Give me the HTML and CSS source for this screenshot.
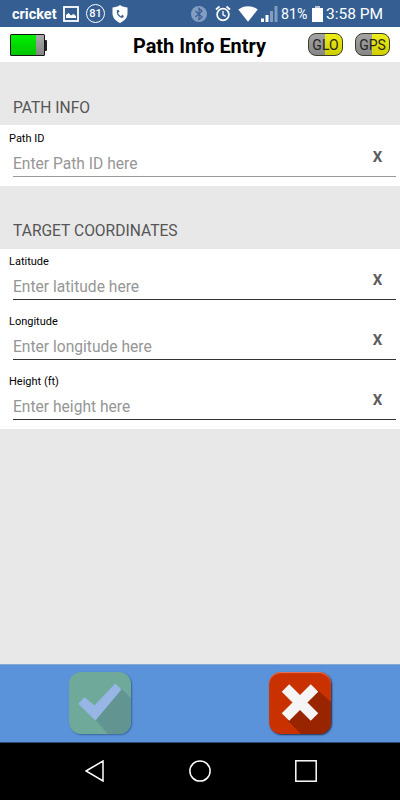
FILE: index.html
```html
<!DOCTYPE html>
<html lang="en">
<head>
    <meta charset="UTF-8">
    <title>Path Info Entry</title>
    <link rel="stylesheet" href="styles.css">
</head>
<body>
    <div class="status-bar">
        <span class="carrier">cricket</span>
        <svg class="icon-picture" width="16" height="16" viewBox="0 0 16 16">
            <rect x="1" y="1" width="14" height="14" fill="none" stroke="#fff" stroke-width="1.8"/>
            <path d="M3 12V9l2.500-2L8 9.500l2.500-1.500L13 10v2z" fill="#fff"/>
        </svg>
        <span class="badge-ring">81</span>
        <svg class="icon-shield" width="16" height="18" viewBox="0 0 16 18">
            <path d="M8 0C5.500 1.800 3 2.400.500 2.400V8.500C.500 13 4 16 8 18c4-2 7.500-5 7.500-9.500V2.400C13 2.400 10.500 1.800 8 0z" fill="#fff"/>
            <path d="M6 5.500c-1 1-.7 3.300.9 5 1.600 1.700 3.500 2 4.300 1" fill="none" stroke="#355f93" stroke-width="1.300"/>
            <path d="M5.500 5.200l1.300 2M9.500 10.600l1.700 1.200" stroke="#355f93" stroke-width="2"/>
        </svg>
        <svg class="icon-bluetooth" width="16" height="16" viewBox="0 0 16 16">
            <circle cx="8" cy="8" r="8" fill="#829dc0"/>
            <path d="M4.500 5l6.500 6-3 2.700V2.300L11 5l-6.500 6" fill="none" stroke="#355f93" stroke-width="1.200"/>
        </svg>
        <svg class="icon-alarm" width="16" height="17" viewBox="0 0 16 17">
            <circle cx="8" cy="9.500" r="5.900" fill="none" stroke="#fff" stroke-width="1.700"/>
            <path d="M1 4.500L4.500 1.500M15 4.500L11.500 1.500" stroke="#fff" stroke-width="1.800"/>
            <path d="M8 6v3.800l2.700 1.600" fill="none" stroke="#fff" stroke-width="1.300"/>
        </svg>
        <svg class="icon-wifi" width="20" height="16" viewBox="0 0 20 16">
            <path d="M.3 3.500C6-1 14-1 19.700 3.500L10 15.800z" fill="#fff"/>
        </svg>
        <svg class="icon-signal" width="17" height="16" viewBox="0 0 17 16">
            <path d="M0 12.500h3V16H0zM4.500 9h3v7h-3z" fill="#fff"/>
            <path d="M9 5h3v11H9zM13.500 0h3v16h-3z" fill="#829dc0"/>
        </svg>
        <span class="battery-percent">81%</span>
        <svg class="icon-battery" width="11" height="16" viewBox="0 0 11 16">
            <path d="M3 0h5v2h3v14H0V2h3z" fill="#fff"/>
            <path d="M3 0h5v2H3z" fill="#b9c8dc"/>
        </svg>
        <span class="clock">3:58 PM</span>
    </div>

    <header>
        <svg class="device-battery" width="37" height="22" viewBox="0 0 37 22">
            <defs>
                <linearGradient id="charge" x1="0" y1="0" x2="0" y2="1">
                    <stop offset="0" stop-color="#00f000"/>
                    <stop offset="1" stop-color="#00c400"/>
                </linearGradient>
                <linearGradient id="empty" x1="0" y1="0" x2="0" y2="1">
                    <stop offset="0" stop-color="#aaa"/>
                    <stop offset="1" stop-color="#858585"/>
                </linearGradient>
            </defs>
            <rect x="34" y="6" width="3" height="11" rx="1" fill="#222"/>
            <rect x="0" y="0" width="35" height="22" rx="1.500" fill="#151515"/>
            <rect x="1" y="1" width="25" height="20" fill="url(#charge)"/>
            <rect x="26" y="1" width="8" height="20" fill="url(#empty)"/>
        </svg>
        <h1>Path Info Entry</h1>
        <span class="source source-glo">GLO</span>
        <span class="source source-gps">GPS</span>
    </header>

    <main>
        <h2 class="first">PATH INFO</h2>
        <section class="fields fields-path">
            <div class="field">
                <label for="path-id">Path ID</label>
                <div class="entry entry-soft">
                    <input type="text" id="path-id" placeholder="Enter Path ID here">
                    <button class="clear">X</button>
                </div>
            </div>
        </section>

        <h2>TARGET COORDINATES</h2>
        <section class="fields">
            <div class="field">
                <label for="latitude">Latitude</label>
                <div class="entry">
                    <input type="text" id="latitude" placeholder="Enter latitude here">
                    <button class="clear">X</button>
                </div>
            </div>
            <div class="field">
                <label for="longitude">Longitude</label>
                <div class="entry">
                    <input type="text" id="longitude" placeholder="Enter longitude here">
                    <button class="clear">X</button>
                </div>
            </div>
            <div class="field">
                <label for="height">Height (ft)</label>
                <div class="entry">
                    <input type="text" id="height" placeholder="Enter height here">
                    <button class="clear">X</button>
                </div>
            </div>
        </section>
    </main>

    <div class="actions">
        <button class="action action-ok" aria-label="Accept">
            <svg width="62" height="62" viewBox="0 0 62 62">
                <path d="M51.500 16L62 26V62H39L26 47.500z" fill="#629592"/>
                <path d="M10.700 31.700L15.500 26.500 25.700 34.800 46.300 13 51 17.500 26.300 47z" fill="#97b6e6" stroke="#97b6e6" stroke-width="2" stroke-linejoin="round"/>
            </svg>
        </button>
        <button class="action action-cancel" aria-label="Cancel">
            <svg width="62" height="62" viewBox="0 0 62 62">
                <path d="M48.500 18L62 30V62H32L18.500 48.500z" fill="#982500"/>
                <path d="M16.500 16L45.500 45M45.500 16L16.500 45" stroke="#f5f5f5" stroke-width="10.600"/>
            </svg>
        </button>
    </div>

    <nav>
        <svg width="20" height="22" viewBox="0 0 20 22">
            <path d="M1 11L18 1v20z" fill="none" stroke="#fff" stroke-width="1.500"/>
        </svg>
        <svg width="22" height="22" viewBox="0 0 22 22">
            <circle cx="11" cy="11" r="10.100" fill="none" stroke="#fff" stroke-width="1.500"/>
        </svg>
        <svg width="22" height="22" viewBox="0 0 22 22">
            <rect x=".8" y=".8" width="20.400" height="20.400" fill="none" stroke="#fff" stroke-width="1.500"/>
        </svg>
    </nav>
</body>
</html>
```

FILE: styles.css
```css
* {
    box-sizing: border-box;
}
body {
    margin: 0;
    height: 800px;
    overflow: hidden;
    display: flex;
    flex-direction: column;
    background-color: #e8e8e8;
    font-family: Roboto, sans-serif;
}
svg {
    display: block;
    flex: none;
}
button {
    border: none;
    padding: 0;
    background: none;
    font-family: inherit;
    cursor: pointer;
}
.status-bar {
    height: 27px;
    flex: none;
    display: flex;
    align-items: center;
    padding-left: 12px;
    background-color: #355f93;
    color: white;
    white-space: nowrap;
}
.carrier {
    width: 51px;
    padding-top: 2px;
    font-size: 14.5px;
    font-weight: bold;
}
.badge-ring {
    width: 19px;
    height: 19px;
    margin-left: 7px;
    border: 1.5px solid white;
    border-radius: 50%;
    font-size: 11px;
    font-weight: 500;
    line-height: 17px;
    text-align: center;
}
.icon-shield {
    margin-left: 7px;
}
.icon-bluetooth {
    margin-left: 63px;
}
.icon-alarm {
    margin-left: 8px;
}
.icon-wifi {
    margin-left: 7px;
}
.icon-signal {
    margin-left: 3px;
}
.battery-percent {
    width: 31px;
    margin-left: 3px;
    font-size: 14.2px;
}
.clock {
    margin-left: 3px;
    font-size: 15.5px;
}
header {
    height: 35px;
    flex: none;
    display: flex;
    align-items: center;
    padding-left: 10px;
    background-color: white;
}
h1 {
    width: 175px;
    margin: 3px 0 0 86px;
    font-size: 19.9px;
    font-weight: bold;
    white-space: nowrap;
    color: black;
}
.source {
    width: 35px;
    height: 23px;
    border: 1px solid #3a3a28;
    border-radius: 8px;
    font-size: 14px;
    line-height: 22px;
    text-align: center;
    color: #26261c;
}
.source-glo {
    background: linear-gradient(rgba(255, 255, 255, 0.1), rgba(0, 0, 0, 0.12)), linear-gradient(to right, #999 50%, #ebeb00 50%);
}
.source-gps {
    margin-left: 12px;
    background: linear-gradient(rgba(255, 255, 255, 0.1), rgba(0, 0, 0, 0.12)), linear-gradient(to right, #999 48%, #ebeb00 48%);
}
main {
    flex: 1;
}
h2 {
    height: 63px;
    margin: 0;
    padding: 35px 0 0 13px;
    font-size: 15.6px;
    font-weight: normal;
    line-height: 20px;
    color: #555;
}
h2.first {
    padding-top: 36px;
}
.fields {
    background-color: white;
}
.fields-path {
    padding-bottom: 1px;
}
.field {
    height: 60px;
    padding-top: 6px;
}
.fields-path .field {
    padding-top: 7px;
}
label {
    display: block;
    height: 14px;
    padding-left: 9px;
    font-size: 11px;
    line-height: 14px;
    color: black;
}
.entry {
    height: 31px;
    margin: 0 4px 0 13px;
    display: flex;
    border-bottom: 1px solid #333;
}
input {
    flex: 1;
    min-width: 0;
    height: 20px;
    margin-top: 8px;
    padding: 0;
    border: none;
    outline: none;
    background: none;
    font-family: inherit;
    font-size: 15.6px;
}
input::placeholder {
    color: #969696;
}
.entry-soft {
    border-bottom-color: #999;
}
.clear {
    width: 37px;
    height: 20px;
    margin-top: 1px;
    font-size: 15px;
    font-weight: bold;
    color: #5c5c5c;
}
.actions {
    height: 79px;
    flex: none;
    display: flex;
    justify-content: center;
    gap: 138px;
    padding-top: 7px;
    background-color: #5b93db;
    border-top: 1px solid #86a9d6;
    border-bottom: 1px solid #2c4a70;
}
.action {
    width: 62px;
    height: 62px;
    border-radius: 12px;
    overflow: hidden;
}
.action-ok {
    background-color: #6fa99a;
    box-shadow: 1px 1px 2px #36649b;
}
.action-cancel {
    background-color: #ca3100;
    box-shadow: 1px 1px 2px #183050, inset 0 1px 1px #e57a5c;
}
nav {
    height: 57px;
    flex: none;
    display: flex;
    align-items: center;
    gap: 84px;
    padding: 0 0 1px 85px;
    background-color: black;
}
```
